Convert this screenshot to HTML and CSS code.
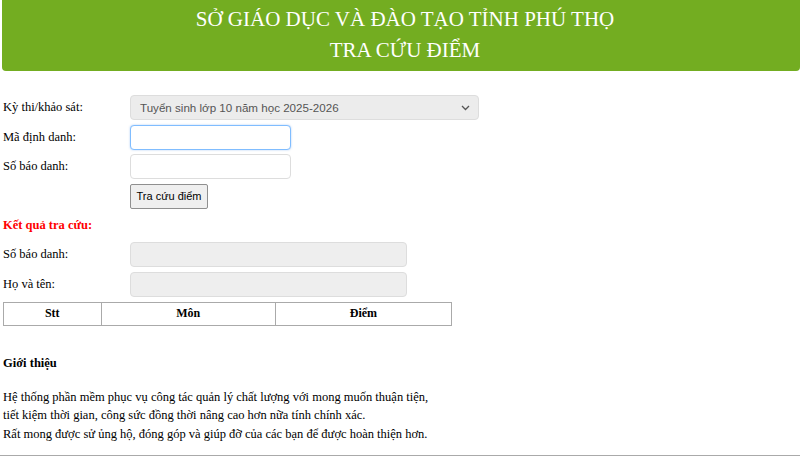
FILE: index.html
```html
<!DOCTYPE html>
<html lang="vi">
<head>
<meta charset="utf-8">
<title>Tra cứu điểm</title>
<link rel="stylesheet" href="styles.css">
</head>
<body>
<div class="page">
  <header class="banner">
    <div class="banner-line">SỞ GIÁO DỤC VÀ ĐÀO TẠO TỈNH PHÚ THỌ</div>
    <div class="banner-line">TRA CỨU ĐIỂM</div>
  </header>

  <form class="form">
    <div class="row">
      <label class="lbl">Kỳ thi/khảo sát:</label>
      <div class="select">
        <span>Tuyển sinh lớp 10 năm học 2025-2026</span>
        <svg class="chev" width="9" height="6" viewBox="0 0 9 6"><path d="M1 1 L4.5 4.5 L8 1" fill="none" stroke="#555" stroke-width="1.3"/></svg>
      </div>
    </div>
    <div class="row">
      <label class="lbl">Mã định danh:</label>
      <div class="input focus"></div>
    </div>
    <div class="row">
      <label class="lbl">Số báo danh:</label>
      <div class="input"></div>
    </div>
    <div class="row">
      <span class="lbl"></span>
      <button type="button" class="btn">Tra cứu điểm</button>
    </div>
  </form>

  <div class="result-title">Kết quả tra cứu:</div>

  <div class="result">
    <div class="row2">
      <span class="lbl">Số báo danh:</span>
      <div class="ro"></div>
    </div>
    <div class="row2">
      <span class="lbl">Họ và tên:</span>
      <div class="ro"></div>
    </div>
  </div>

  <table class="scores">
    <tr><th class="c1">Stt</th><th class="c2">Môn</th><th class="c3">Điểm</th></tr>
  </table>

  <div class="intro">
    <div class="intro-title">Giới thiệu</div>
    <p class="intro-text">Hệ thống phần mềm phục vụ công tác quản lý chất lượng với mong muốn thuận tiện,<br>tiết kiệm thời gian, công sức đồng thời nâng cao hơn nữa tính chính xác.<br>Rất mong được sử ủng hộ, đóng góp và giúp đỡ của các bạn để được hoàn thiện hơn.</p>
  </div>
  <div class="rule"></div>
</div>
</body>
</html>
```

FILE: styles.css
```css
html, body {
  margin: 0;
  padding: 0;
  background: #fff;
}
body {
  font-family: "Liberation Serif", "Times New Roman", serif;
  font-size: 12.5px;
  color: #000;
}
.page {
  padding: 0 0 0 2px;
}
.banner {
  background: #73ad21;
  color: #fff;
  text-align: center;
  height: 71px;
  border-radius: 0 0 4px 4px;
  padding-top: 4px;
  box-sizing: border-box;
  padding-left: 8px;
}
.banner-line {
  font-size: 21px;
  line-height: 31px;
}
.form {
  margin: 24px 0 0 0;
  display: flex;
  flex-direction: column;
  gap: 4.5px;
}
.row {
  display: flex;
  align-items: center;
  height: 25px;
}
.lbl {
  width: 127px;
  padding-left: 1px;
  flex: none;
}
.select {
  height: 23px;
  border: 1px solid #ddd;
  border-radius: 4px;
  background: #ececec;
  display: flex;
  align-items: center;
  justify-content: space-between;
  padding: 0 8px 0 9px;
  box-sizing: content-box;
  width: 330px;
  font-family: "Liberation Sans", Arial, sans-serif;
  font-size: 11.6px;
  color: #555;
}
.chev { margin-top: 1px; }
.input {
  width: 159px;
  height: 23px;
  border: 1px solid #ddd;
  border-radius: 4px;
  background: #fff;
}
.input.focus {
  border-color: #80bdff;
  box-shadow: 0 0 2px rgba(80, 150, 240, 0.5);
}
.btn {
  height: 25px;
  width: 78px;
  padding: 0;
  border: 1px solid #8f8f8f;
  border-radius: 2px;
  background: #efefef;
  font-family: "Liberation Sans", Arial, sans-serif;
  font-size: 11px;
  color: #000;
  margin: 0;
}
.result-title {
  color: #ff0000;
  font-weight: bold;
  margin-top: 9px;
  line-height: 15px;
  padding-left: 1px;
}
.result {
  margin-top: 9px;
  display: flex;
  flex-direction: column;
  gap: 5px;
}
.row2 {
  display: flex;
  align-items: center;
  height: 25px;
}
.ro {
  width: 275px;
  height: 23px;
  border: 1px solid #ddd;
  border-radius: 4px;
  background: #eeeeee;
}
.scores {
  margin-top: 5px;
  margin-left: 1px;
  border-collapse: collapse;
  width: 449px;
}
.scores th {
  border: 1px solid #aaa;
  height: 22px;
  padding: 0;
  font-size: 12px;
  font-weight: bold;
  text-align: center;
}
.c1 { width: 97px; }
.c2 { width: 174px; }
.c3 { width: 176px; }
.intro {
  margin-top: 30px;
  padding-left: 1px;
}
.intro-title {
  font-weight: bold;
  line-height: 15px;
}
.intro-text {
  margin: 17px 0 0 0;
  line-height: 18.5px;
}
.rule {
  margin-top: 12px;
  border-top: 1px solid #aaa;
  margin-left: -2px;
}
```
